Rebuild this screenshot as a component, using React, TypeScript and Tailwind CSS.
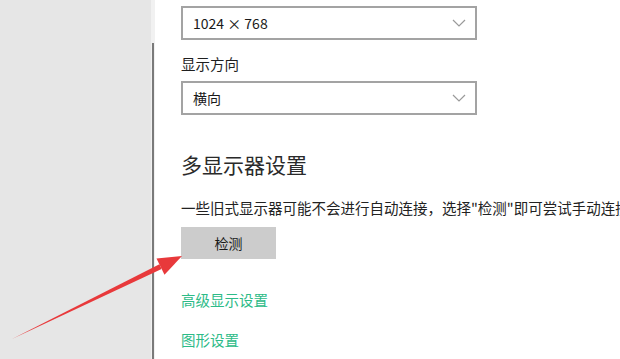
import React from 'react';

const cjk = { fontFamily: '"Noto Sans CJK SC", "Noto Sans", sans-serif' };

function Chevron() {
  return (
    <svg width="14" height="8" viewBox="0 0 14 8" className="shrink-0">
      <path d="M1 1 L7 7 L13 1" fill="none" stroke="#9a9a9a" strokeWidth="1.2" />
    </svg>
  );
}

function Select({ value }: { value: string }) {
  return (
    <div className="w-[296px] h-[34px] border-2 border-[#a3a3a3] flex items-center justify-between pl-[10px] pr-[9px] bg-white">
      <span className="text-[14px] text-[#1a1a1a] leading-none">{value}</span>
      <Chevron />
    </div>
  );
}

export default function App() {
  return (
    <div className="relative w-[620px] h-[359px] overflow-hidden bg-white flex" style={cjk}>
      {/* Left nav (blank) */}
      <div className="w-[151px] shrink-0 h-full bg-[#e6e6e6]" />
      {/* Scrollbar strip */}
      <div className="w-[30px] shrink-0 h-full flex">
        <div className="w-[4px] h-full bg-[#f1f1f1] pt-[43px]">
          <div className="ml-[1px] w-[2px] h-full bg-[#7a7a7a]" />
        </div>
      </div>
      {/* Settings content */}
      <div className="flex-1 min-w-0 flex flex-col pt-[6px] whitespace-nowrap">
        <Select value="1024 × 768" />
        <div className="mt-[14px] h-[20px] leading-[20px] text-[14.5px] text-[#1f1f1f]">显示方向</div>
        <div className="mt-[7px]">
          <Select value="横向" />
        </div>
        <div className="mt-[35px] h-[28px] leading-[28px] text-[21px] text-[#2a2a2a]">多显示器设置</div>
        <div className="mt-[20px] h-[20px] leading-[20px] text-[14.5px] text-[#222]">
          一些旧式显示器可能不会进行自动连接，选择"检测"即可尝试手动连接。
        </div>
        <button className="mt-[9px] w-[95px] h-[32px] bg-[#cccccc] text-[14px] text-[#1a1a1a] flex items-center justify-center">
          检测
        </button>
        <a className="mt-[31px] h-[20px] leading-[20px] text-[14.5px] text-[#2dbb88] w-fit">高级显示设置</a>
        <a className="mt-[20px] h-[20px] leading-[20px] text-[14.5px] text-[#2dbb88] w-fit">图形设置</a>
      </div>
      {/* Red annotation arrow */}
      <svg className="absolute left-0 top-0 pointer-events-none" width="620" height="359" viewBox="0 0 620 359">
        <polygon points="12,339 159.4,264.3 161.6,268.9" fill="#e8393b" />
        <polygon points="182,256 156.5,258.5 164.5,274.7" fill="#e8393b" />
      </svg>
    </div>
  );
}
